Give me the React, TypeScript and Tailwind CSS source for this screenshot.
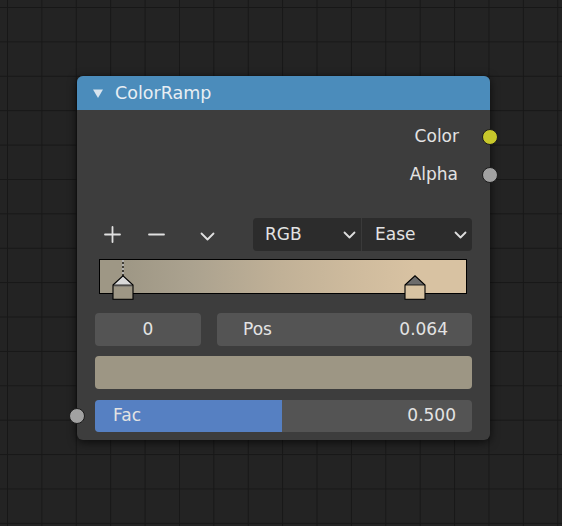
import React from "react";

const FONT = { fontFamily: '"DejaVu Sans", "Liberation Sans", sans-serif' };

function Chevron({ className = "" }: { className?: string }) {
  return (
    <svg width="13" height="8" viewBox="0 0 13 8" className={className}>
      <path d="M1.5 1.5 L6.5 6.5 L11.5 1.5" fill="none" stroke="#dedede" strokeWidth="1.8" strokeLinecap="round" strokeLinejoin="round" />
    </svg>
  );
}

// ramp stop marker: triangle cap + colour square
function Marker({ color, selected }: { color: string; selected?: boolean }) {
  return (
    <svg width="22" height="25" viewBox="0 0 22 25">
      <polygon points="1,10 11,0.8 21,10" fill={selected ? "#d9d9d9" : "#6c6c6c"} />
      <rect x="1" y="10" width="20" height="14" fill={color} />
      {selected && <line x1="1.5" y1="11" x2="20.5" y2="11" stroke="#6a6a6a" strokeWidth="1" />}
      <path d="M1 10 L11 0.8 L21 10 V24.3 H1 Z" fill="none" stroke="#000" strokeWidth="1.1" />
      <line x1="1" y1="10" x2="21" y2="10" stroke="#000" strokeWidth="0.8" />
    </svg>
  );
}

function Socket({ color, side }: { color: string; side: "left" | "right" }) {
  return (
    <span
      className={[
        "absolute top-1/2 h-[16px] w-[16px] -translate-y-1/2 rounded-full border border-[#1b1b1b]",
        side === "right" ? "right-[-8px]" : "left-[-8px]",
      ].join(" ")}
      style={{ background: color }}
    />
  );
}

export default function App() {
  return (
    <div
      style={FONT}
      className="h-[526px] w-[562px] overflow-hidden bg-[#232323] bg-[linear-gradient(to_right,#171717_1px,transparent_1px),linear-gradient(to_bottom,#171717_1px,transparent_1px)] bg-[size:34.4px_34.4px] bg-[position:7px_7px] pl-[77px] pt-[76px] text-[17px] text-[#e3e3e3]"
    >
      <div className="w-[413px] rounded-[6px] bg-[#3d3d3d] shadow-[0_2px_10px_rgba(0,0,0,0.7)]">
        {/* header */}
        <div className="flex h-[34px] items-center gap-[12px] rounded-t-[6px] bg-[#4b8cbb] pl-[16px] text-[17.5px] text-[#e8eef3]">
          <svg width="10" height="9" viewBox="0 0 10 9">
            <polygon points="0,0.5 10,0.5 5,9" fill="#d8e4ee" />
          </svg>
          <span>ColorRamp</span>
        </div>

        <div className="pb-[8px] pt-[8px]">
          {/* outputs */}
          <div className="relative flex h-[38px] items-center justify-end pr-[31px]">
            Color
            <Socket color="#c8c82b" side="right" />
          </div>
          <div className="relative flex h-[38px] items-center justify-end pr-[32px]">
            Alpha
            <Socket color="#a1a1a1" side="right" />
          </div>

          <div className="px-[18px]">
            {/* toolbar */}
            <div className="mt-[24px] flex h-[33px] items-center justify-between">
              <div className="flex items-center">
                <svg width="17" height="17" viewBox="0 0 17 17" className="ml-[9px]">
                  <path d="M8.5 1 V16 M1 8.5 H16" stroke="#e0e0e0" strokeWidth="1.8" strokeLinecap="round" />
                </svg>
                <svg width="17" height="17" viewBox="0 0 17 17" className="ml-[27px]">
                  <path d="M1 8.5 H16" stroke="#e0e0e0" strokeWidth="1.8" strokeLinecap="round" />
                </svg>
                <svg width="15" height="9" viewBox="0 0 15 9" className="ml-[35px] mt-[3px]">
                  <path d="M1.5 1.5 L7.5 7.5 L13.5 1.5" fill="none" stroke="#e0e0e0" strokeWidth="1.8" strokeLinecap="round" strokeLinejoin="round" />
                </svg>
              </div>
              <div className="flex h-[33px] w-[219px] overflow-hidden rounded-[4px] bg-[#2c2c2c]">
                <div className="flex w-[109px] items-center justify-between border-r border-[#3a3a3a] pl-[12px] pr-[5px]">
                  <span>RGB</span>
                  <Chevron />
                </div>
                <div className="flex flex-1 items-center justify-between pl-[13px] pr-[5px]">
                  <span>Ease</span>
                  <Chevron />
                </div>
              </div>
            </div>

            {/* ramp */}
            <div className="relative ml-[4px] mt-[8px] h-[35px] w-[368px] border border-black bg-[linear-gradient(to_right,#9e9785_0%,#9e9785_6.4%,#aba28f_25%,#c1b197_50%,#d0bc9e_72%,#d8c2a2_85.9%,#d8c2a2_100%)]">
              <svg width="2" height="16" viewBox="0 0 2 16" className="absolute left-[22px] top-0">
                <line x1="1" y1="0" x2="1" y2="16" stroke="#000" strokeWidth="1.2" />
                <line x1="1" y1="0" x2="1" y2="16" stroke="#fff" strokeWidth="1.2" strokeDasharray="2 2" />
              </svg>
              <div className="absolute left-[12px] top-[15px] flex">
                <Marker color="#9e9785" selected />
              </div>
              <div className="absolute left-[304px] top-[15px] flex">
                <Marker color="#d8c3a2" />
              </div>
            </div>

            {/* index / pos */}
            <div className="mt-[19px] flex h-[33px] gap-[16px]">
              <div className="flex w-[106px] items-center justify-center rounded-[4px] bg-[#545454]">0</div>
              <div className="flex flex-1 items-center justify-between rounded-[4px] bg-[#545454] pl-[26px] pr-[24px]">
                <span>Pos</span>
                <span>0.064</span>
              </div>
            </div>

            {/* colour swatch */}
            <div className="mt-[10px] h-[33px] rounded-[4px] bg-[#9d9684]" />

            {/* fac */}
            <div className="relative mt-[11px] flex h-[32px]">
              <span className="absolute left-[-26px] top-1/2 h-[16px] w-[16px] -translate-y-1/2 rounded-full border border-[#1b1b1b] bg-[#a1a1a1]" />
              <div className="relative flex flex-1 items-center justify-between overflow-hidden rounded-[4px] bg-[#545454] pl-[18px] pr-[16px]">
                <div className="absolute inset-y-0 left-0 w-[187px] bg-[#5680c2]" />
                <span className="relative">Fac</span>
                <span className="relative">0.500</span>
              </div>
            </div>
          </div>
        </div>
      </div>
    </div>
  );
}
